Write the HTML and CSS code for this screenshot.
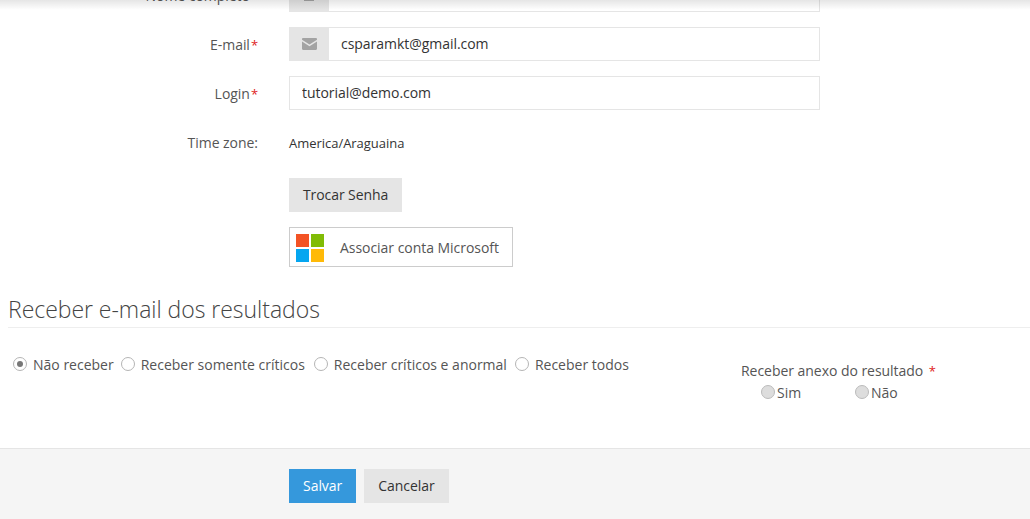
FILE: index.html
```html
<!DOCTYPE html>
<html lang="pt">
<head>
<meta charset="utf-8">
<title>Perfil</title>
<link rel="stylesheet" href="styles.css">
</head>
<body>
<div class="top-shadow"></div>
<main class="page">
  <form class="form">
    <div class="row">
      <label class="label">Nome completo<span class="req">*</span></label>
      <div class="group">
        <span class="addon">
          <svg width="14" height="14" viewBox="0 0 14 14"><path fill="#a3a3a3" d="M2 3h10v10H2z"/></svg>
        </span>
        <input class="input input-addon" type="text" value="">
      </div>
    </div>
    <div class="row">
      <label class="label">E-mail<span class="req">*</span></label>
      <div class="group">
        <span class="addon">
          <svg width="15" height="12" viewBox="0 0 15 12"><path fill="#a3a3a3" d="M0 1.2C0 .5.5 0 1.2 0h12.6c.7 0 1.2.5 1.2 1.2v.6L7.5 6.600 0 1.800zM0 3.400l7.500 4.800L15 3.400v7.400c0 .7-.5 1.200-1.200 1.200H1.200C.5 12 0 11.500 0 10.800z"/></svg>
        </span>
        <input class="input input-addon" type="text" value="csparamkt@gmail.com">
      </div>
    </div>
    <div class="row">
      <label class="label">Login<span class="req">*</span></label>
      <div class="group">
        <input class="input" type="text" value="tutorial@demo.com">
      </div>
    </div>
    <div class="row row-static">
      <label class="label">Time zone:</label>
      <span class="static">America/Araguaina</span>
    </div>
    <div class="actions">
      <button class="btn btn-grey btn-password" type="button">Trocar Senha</button>
      <button class="btn-ms" type="button">
        <svg class="ms-logo" width="28" height="28" viewBox="0 0 28 28">
          <rect width="13" height="13" fill="#f35325"/>
          <rect x="15" width="13" height="13" fill="#81bc06"/>
          <rect y="15" width="13" height="13" fill="#05a6f0"/>
          <rect x="15" y="15" width="13" height="13" fill="#ffba08"/>
        </svg>
        <span>Associar conta Microsoft</span>
      </button>
    </div>
    <h2 class="section-title">Receber e-mail dos resultados</h2>
    <div class="prefs">
      <div class="radios">
        <label class="radio"><span class="dot dot-on"></span>Não receber</label>
        <label class="radio"><span class="dot"></span>Receber somente críticos</label>
        <label class="radio"><span class="dot"></span>Receber críticos e anormal</label>
        <label class="radio"><span class="dot"></span>Receber todos</label>
      </div>
      <div class="attach">
        <div class="attach-title">Receber anexo do resultado <span class="req-wide">*</span></div>
        <div class="attach-options">
          <label class="radio-grey"><span class="dot-grey"></span>Sim</label>
          <label class="radio-grey"><span class="dot-grey"></span>Não</label>
        </div>
      </div>
    </div>
  </form>
  <footer class="footer">
    <button class="btn btn-blue" type="button">Salvar</button>
    <button class="btn btn-grey" type="button">Cancelar</button>
  </footer>
</main>
</body>
</html>
```
FILE: styles.css
```css
* { box-sizing: border-box; }
html, body { margin: 0; padding: 0; height: 519px; overflow: hidden; background: #fff; }
body { font-family: "Open Sans", sans-serif; font-size: 14px; color: #555; letter-spacing: -0.04px; }
.top-shadow {
  position: absolute; left: 0; top: 0; right: 0; height: 10px; z-index: 2;
  background: linear-gradient(to bottom, rgba(0,0,0,.1), rgba(0,0,0,0));
  pointer-events: none;
}
.page { margin-top: -22px; }
.form { display: block; }
.row { display: flex; align-items: center; height: 34px; margin-bottom: 15px; }
.label { width: 258px; margin-right: 31px; text-align: right; color: #555; line-height: 20px; padding-top: 2px; }
.req { color: #e02222; margin-left: 1px; font-size: 13px; }
.group { display: flex; width: 531px; height: 34px; }
.addon { width: 40px; flex: none; background: #e5e5e5; display: flex; align-items: center; justify-content: center; }
.input {
  flex: 1; min-width: 0; height: 34px; border: 1px solid #e5e5e5; padding: 0 12px 2px;
  font: 14px "Open Sans", sans-serif; letter-spacing: -0.04px; color: #333; background: #fff; outline: 0;
}
.input-addon { border-left: 0; }
.row-static { margin-bottom: 19px; }
.static { font-size: 13px; color: #333; padding-top: 2px; letter-spacing: -0.03px; }
.actions { padding-left: 289px; display: flex; flex-direction: column; align-items: flex-start; gap: 15px; }
.btn {
  height: 34px; border: 0; padding: 0 14px 2px; font: 14px "Open Sans", sans-serif; letter-spacing: -0.04px; color: #333;
  display: inline-flex; align-items: center; white-space: nowrap;
}
.btn-password { width: 113px; padding-right: 0; letter-spacing: -0.09px; }
.btn-grey { background: #e5e5e5; }
.btn-blue { background: #3598dc; color: #fff; }
.btn-ms {
  width: 224px; height: 40px; border: 1px solid #ccc; background: #fff; padding: 0 0 0 6px;
  font: 14px "Open Sans", sans-serif; letter-spacing: -0.04px; color: #555; display: flex; align-items: center;
}
.ms-logo { margin: 2px 16px 0 0; flex: none; }
.section-title {
  margin: 26px 0 0 8px; padding-bottom: 0; height: 35px; line-height: 33px;
  font-size: 23px; font-weight: 300; color: #444; letter-spacing: -0.03px;
  border: 0; position: relative;
}
.section-title::after {
  content: ""; position: absolute; left: 0; right: 0; bottom: 0; height: 1px; background: #eee;
}
.prefs { position: relative; height: 120px; }
.radios { display: flex; padding: 26px 0 0 13px; gap: 8px; letter-spacing: 0; }
.radio { display: inline-flex; align-items: center; height: 20px; color: #555; white-space: nowrap; }
.radio:first-child { margin-right: -1px; }
.radio:nth-child(2) { margin-right: 1px; }
.dot {
  width: 14px; height: 14px; border: 1px solid #b5b5b5; border-radius: 50%; margin-right: 6px;
  display: inline-flex; align-items: center; justify-content: center; background: #fff;
}
.dot-on::before { content: ""; width: 6px; height: 6px; border-radius: 50%; background: #777; }
.attach { position: absolute; left: 741px; top: 33px; }
.attach-title { line-height: 20px; color: #555; }
.req-wide { color: #e02222; margin-left: 2px; font-size: 13px; }
.attach-options { display: flex; padding-left: 20px; height: 24px; margin-top: -1px; align-items: center; }
.radio-grey { display: inline-flex; align-items: center; width: 94px; color: #555; }
.dot-grey { width: 14px; height: 14px; border-radius: 50%; border: 1px solid #bbb; background: #ddd; margin-right: 2px; }
.footer {
  height: 71px; background: #f5f5f5; border-top: 1px solid #e5e5e5;
  padding: 20px 0 0 289px; display: flex; align-items: flex-start; gap: 8px;
}
```
